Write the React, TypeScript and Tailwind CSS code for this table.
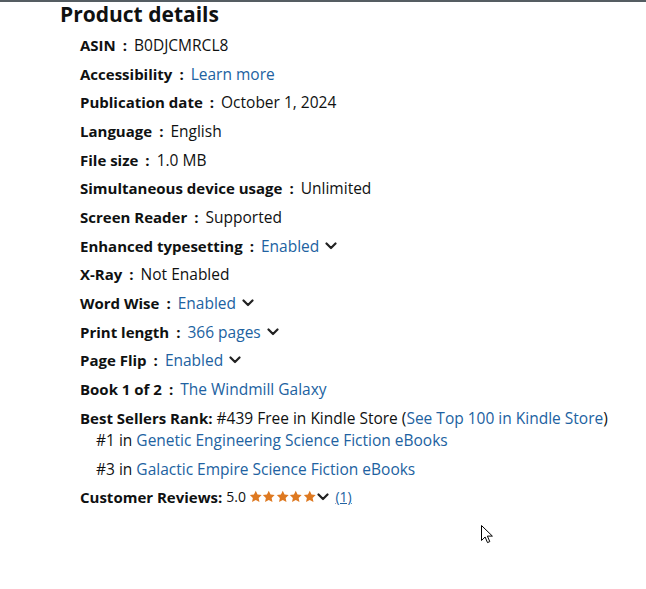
import { ReactNode } from "react"

const font = { fontFamily: '"Open Sans", "Noto Sans", Arial, sans-serif' }

function Chevron({ className = "ml-[6px]" }: { className?: string }) {
	return (
		<svg
			viewBox="0 0 12 8"
			className={`${className} inline-block h-[8px] w-[12px] shrink-0`}
			fill="none"
			stroke="#222"
			strokeWidth="2.2"
			strokeLinecap="round"
			strokeLinejoin="round"
		>
			<path d="M1.5 1.5 6 6l4.5-4.5" />
		</svg>
	)
}

function Star() {
	return (
		<svg viewBox="0 0 24 24" className="h-[13.5px] w-[13.5px]" fill="#de7921">
			<path d="M12 1.5l3.2 6.7 7.3.9-5.4 5 1.5 7.2L12 17.7l-6.6 3.6 1.5-7.2-5.4-5 7.3-.9z" />
		</svg>
	)
}

function Link({ children }: { children: ReactNode }) {
	return <a className="cursor-pointer text-[#2162a1]">{children}</a>
}

type Row = { label: string; value: ReactNode; chevron?: boolean }

const rows: Row[] = [
	{ label: "ASIN", value: "B0DJCMRCL8" },
	{ label: "Accessibility", value: <Link>Learn more</Link> },
	{ label: "Publication date", value: "October 1, 2024" },
	{ label: "Language", value: "English" },
	{ label: "File size", value: "1.0 MB" },
	{ label: "Simultaneous device usage", value: "Unlimited" },
	{ label: "Screen Reader", value: "Supported" },
	{ label: "Enhanced typesetting", value: <Link>Enabled</Link>, chevron: true },
	{ label: "X-Ray", value: "Not Enabled" },
	{ label: "Word Wise", value: <Link>Enabled</Link>, chevron: true },
	{ label: "Print length", value: <Link>366 pages</Link>, chevron: true },
	{ label: "Page Flip", value: <Link>Enabled</Link>, chevron: true },
	{ label: "Book 1 of 2", value: <Link>The Windmill Galaxy</Link> },
]

export default function App() {
	return (
		<div
			className="relative h-[589px] w-[646px] overflow-hidden border-t-2 border-[#555d62] bg-white text-[15.5px] text-[#0f1111]"
			style={font}
		>
			<h2 className="pl-[60px] text-[21px] font-bold leading-[24px]">
				Product details
			</h2>
			<ul className="mt-[9px] flex flex-col gap-[8.67px] pl-[80px] leading-[20px]">
				{rows.map((row) => (
					<li key={row.label} className="flex items-center whitespace-nowrap">
						<span className="text-[15px] font-bold">{row.label}</span>
						<span className="mx-[7px] text-[15px] font-bold">:</span>
						<span>{row.value}</span>
						{row.chevron && <Chevron />}
					</li>
				))}
				<li className="whitespace-nowrap">
					<span className="text-[15px] font-bold">Best Sellers Rank:</span> #439
					Free in Kindle Store (<Link>See Top 100 in Kindle Store</Link>)
					<ul className="mt-[2px] flex flex-col gap-[9px] pl-[16px]">
						<li>
							#1 in <Link>Genetic Engineering Science Fiction eBooks</Link>
						</li>
						<li>
							#3 in <Link>Galactic Empire Science Fiction eBooks</Link>
						</li>
					</ul>
				</li>
				<li className="flex items-center whitespace-nowrap">
					<span className="text-[15px] font-bold">Customer Reviews:</span>
					<span className="ml-[4px] text-[14px]">5.0</span>
					<span className="ml-[3px] flex">
						<Star />
						<Star />
						<Star />
						<Star />
						<Star />
					</span>
					<Chevron className="ml-[1px]" />
					<a className="ml-[6px] text-[14px] text-[#2162a1] underline">(1)</a>
				</li>
			</ul>
			<svg
				viewBox="0 0 12 19"
				className="absolute left-[481px] top-[523px] h-[19px] w-[12px]"
			>
				<path
					d="M0.5 0.5v15l3.6-3.5 2.4 5.6 2.3-1-2.4-5.5h5z"
					fill="#fff"
					stroke="#000"
					strokeWidth="1"
					strokeLinejoin="round"
				/>
			</svg>
		</div>
	)
}
